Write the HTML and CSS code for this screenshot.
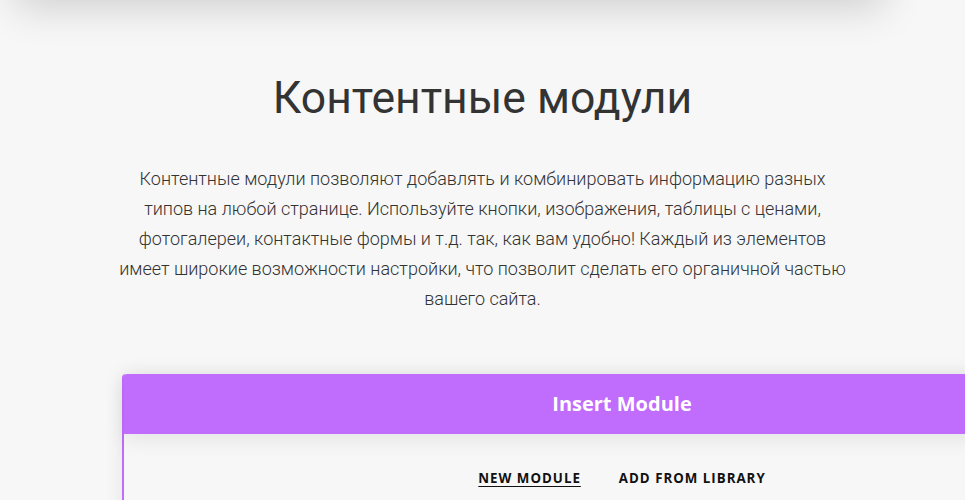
FILE: index.html
```html
<!DOCTYPE html>
<html lang="ru">
<head>
<meta charset="utf-8">
<title>Контентные модули</title>
<link rel="stylesheet" href="styles.css">
</head>
<body>
<div class="topcard"></div>
<section class="intro">
  <h1 class="title">Контентные модули</h1>
  <p class="lead">Контентные модули позволяют добавлять и комбинировать информацию разных типов на любой странице. Используйте кнопки, изображения, таблицы с ценами, фотогалереи, контактные формы и т.д. так, как вам удобно! Каждый из элементов имеет широкие возможности настройки, что позволит сделать его органичной частью вашего сайта.</p>
</section>
<div class="modal">
  <div class="modal-head">Insert Module</div>
  <div class="modal-body">
    <nav class="tabs">
      <span class="tab active">NEW MODULE</span>
      <span class="tab">ADD FROM LIBRARY</span>
    </nav>
  </div>
</div>
</body>
</html>
```
FILE: styles.css
```css
html, body {
  margin: 0;
  padding: 0;
  overflow: hidden;
  background: #f7f7f7;
}
body {
  width: 965px;
  height: 500px;
  font-family: Roboto, "Liberation Sans", sans-serif;
  color: #333;
}
.topcard {
  width: 870px;
  height: 100px;
  margin: -100px 0 0 15px;
  background: #f7f7f7;
  box-shadow: 0 8px 40px rgba(0, 0, 0, 0.16);
}
.intro {
  text-align: center;
  padding-top: 72px;
}
.title {
  margin: 0;
  font-family: Roboto, "Liberation Sans", sans-serif;
  font-weight: 400;
  font-size: 44.5px;
  line-height: 52px;
  color: #333;
}
.lead {
  width: 735px;
  margin: 40px auto 0;
  font-weight: 300;
  font-size: 18px;
  line-height: 30px;
  color: #333;
}
.modal {
  width: 996px;
  margin: 60px 0 0 122px;
  border-left: 2px solid #c06cfc;
  border-radius: 4px 0 0 0;
  background: #f7f7f7;
  box-shadow: 0 0 20px rgba(0, 0, 0, 0.08);
  height: 200px;
}
.modal-head {
  height: 60px;
  background: #c06cfc;
  border-radius: 3px 0 0 0;
  color: #fff;
  font-family: "Open Sans", sans-serif;
  font-weight: 700;
  font-size: 20px;
  line-height: 60px;
  text-align: center;
  box-shadow: 0 6px 20px rgba(0, 0, 0, 0.08);
  position: relative;
}
.modal-body {
  padding-top: 34px;
}
.tabs {
  display: flex;
  justify-content: center;
  gap: 38px;
}
.tab {
  font-family: "Open Sans", sans-serif;
  font-weight: 700;
  font-size: 13.3px;
  letter-spacing: 1px;
  color: #111;
  line-height: 20px;
}
.tab.active {
  text-decoration: underline;
  text-underline-offset: 3px;
}
```
